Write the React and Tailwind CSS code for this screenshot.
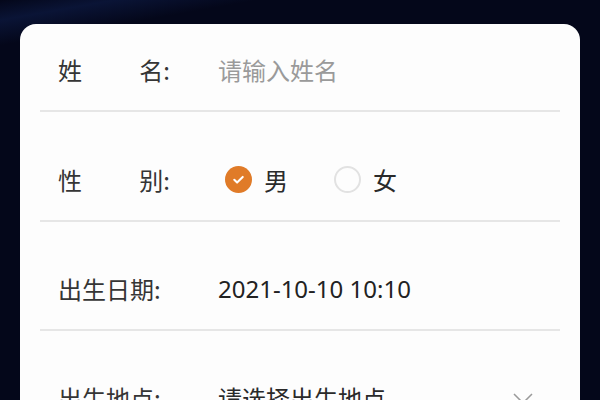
import React from "react";

const cjk = { fontFamily: '"Noto Sans CJK SC", "Noto Sans", sans-serif' };

function Label({ children }) {
	return (
		<div className="flex w-[160px] shrink-0 text-[24px] leading-[26px] text-[#353535]">
			{children}
		</div>
	);
}

function Radio({ checked, label }) {
	return (
		<div className="flex items-center gap-[12px]">
			{checked ? (
				<span className="flex h-[27px] w-[27px] items-center justify-center rounded-full bg-[#e07b28]">
					<svg width="15" height="15" viewBox="0 0 16 16" fill="none">
						<path
							d="M3.5 8.3l3 3 6-6"
							stroke="white"
							strokeWidth="2.2"
							strokeLinecap="round"
							strokeLinejoin="round"
						/>
					</svg>
				</span>
			) : (
				<span className="h-[27px] w-[27px] rounded-full border-2 border-[#e2e2e2]" />
			)}
			<span className="text-[24px] leading-[26px] text-[#2a2a2a]">{label}</span>
		</div>
	);
}

export default function App() {
	return (
		<div
			className="h-[400px] w-[600px] overflow-hidden bg-[#04071a] bg-[linear-gradient(170deg,#04071a_0%,#0a1436_4%,#04071a_9%,#04071a_100%)] px-[20px] pt-[24px]"
			style={cjk}
		>
			<div className="h-[420px] rounded-[16px] bg-[#fdfdfd] px-[20px]">
				<div className="flex items-center border-b-2 border-[#e6e6e6] pb-[27px] pl-[18px] pt-[33px]">
					<Label>
						<div className="flex w-[112px] justify-between">
							<span>姓</span>
							<span>名:</span>
						</div>
					</Label>
					<span className="text-[24px] leading-[26px] text-[#9a9a9a]">请输入姓名</span>
				</div>
				<div className="flex items-center border-b-2 border-[#e6e6e6] pb-[27px] pl-[18px] pt-[54px]">
					<Label>
						<div className="flex w-[112px] justify-between">
							<span>性</span>
							<span>别:</span>
						</div>
					</Label>
					<div className="flex items-center gap-[46px] pl-[7px]">
						<Radio checked label="男" />
						<Radio label="女" />
					</div>
				</div>
				<div className="flex items-center border-b-2 border-[#e6e6e6] pb-[27px] pl-[18px] pt-[54px]">
					<Label>
						<span>出生日期:</span>
					</Label>
					<span
						className="text-[24px] leading-[26px] text-[#222]"
						style={{ fontFamily: '"Noto Sans", "Noto Sans CJK SC", sans-serif' }}
					>
						2021-10-10 10:10
					</span>
				</div>
				<div className="flex items-center pb-[27px] pl-[18px] pt-[54px]">
					<Label>
						<span>出生地点:</span>
					</Label>
					<span className="flex-1 text-[24px] leading-[26px] text-[#2a2a2a]">请选择出生地点</span>
					<svg width="20" height="11" viewBox="0 0 20 11" fill="none" className="mr-[27px]">
						<path d="M1 1l9 9 9-9" stroke="#9a9a9a" strokeWidth="1.5" />
					</svg>
				</div>
			</div>
		</div>
	);
}
